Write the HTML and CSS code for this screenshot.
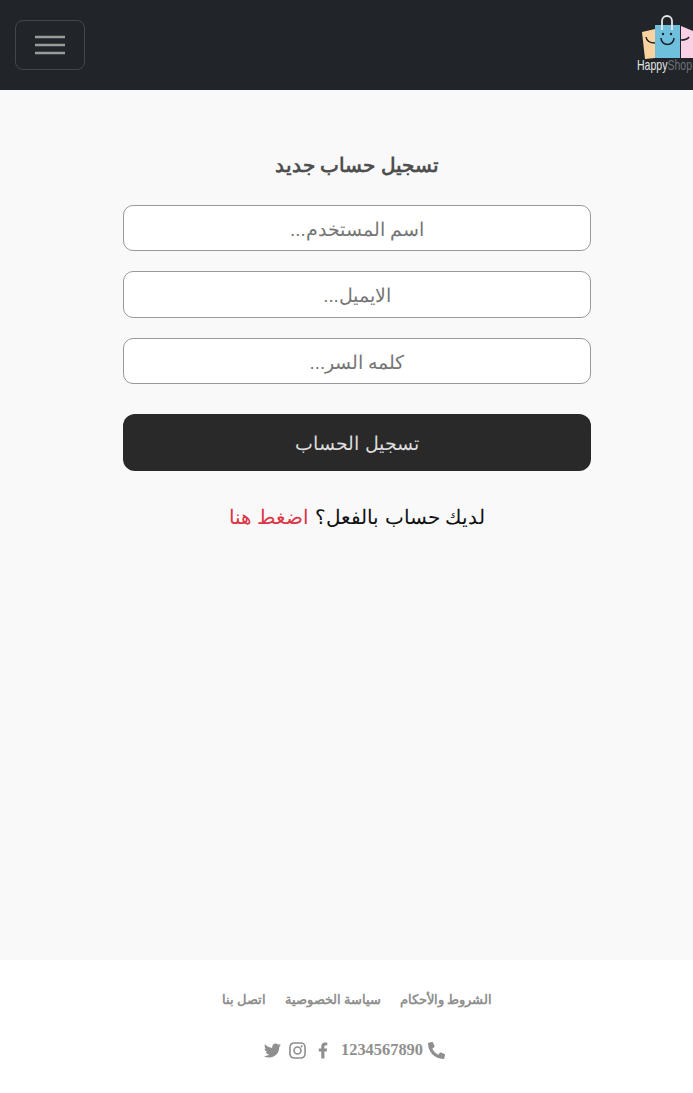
FILE: index.html
```html
<!DOCTYPE html>
<html lang="ar" dir="rtl">
<head>
<meta charset="utf-8">
<title>تسجيل حساب جديد</title>
<link rel="stylesheet" href="styles.css">
</head>
<body>
<header class="topbar" dir="ltr">
  <button class="toggler" type="button" aria-label="menu">
    <svg class="toggler-icon" viewBox="0 0 30 30" width="30" height="30"><path d="M0 7h30M0 15h30M0 23h30" stroke="#9a9a9a" stroke-width="2.6" fill="none"/></svg>
  </button>
  <div class="logo">
    <svg viewBox="0 0 57 62" width="57" height="62">
      <path d="M6 19 L19 16 L19 45 L9 46 Z" fill="#fbd3a0"/>
      <path d="M45 13 L57 18 L57 45 L45 45 Z" fill="#fbcfe4"/>
      <rect x="19" y="12" width="25" height="33" fill="#6fc0dd"/>
      <path d="M26 17 V8 a5 5 0 0 1 10 0 V17" stroke="#e8e8e8" stroke-width="1.800" fill="none"/>
      <path d="M25 25 a6.500 6.500 0 0 0 13 0" stroke="#1d2228" stroke-width="1.500" fill="none"/>
      <path d="M10 24 q1 6 9 6 M45 27 q6 0 8 -3" stroke="#1d2228" stroke-width="1.500" fill="none"/>
      <circle cx="27" cy="21" r="1.200" fill="#1d2228"/><circle cx="35" cy="21" r="1.200" fill="#1d2228"/>
      <text class="logo-text" x="1" y="57" textLength="55" lengthAdjust="spacingAndGlyphs"><tspan class="logo-happy">Happy</tspan><tspan class="logo-shop">Shop</tspan></text>
    </svg>
  </div>
</header>

<main class="page">
  <form class="register">
    <h1 class="title">تسجيل حساب جديد</h1>
    <input class="field" type="text" placeholder="اسم المستخدم...">
    <input class="field field-tall" type="email" placeholder="الايميل...">
    <input class="field" type="password" placeholder="كلمه السر...">
    <button class="submit" type="button">تسجيل الحساب</button>
    <p class="login-note">لديك حساب بالفعل؟ <a class="login-link" href="#">اضغط هنا</a></p>
  </form>
</main>

<footer class="footer">
  <nav class="footer-links">
    <a href="#">الشروط والأحكام</a>
    <a href="#">سياسة الخصوصية</a>
    <a href="#">اتصل بنا</a>
  </nav>
  <div class="footer-contact">
    <svg class="ico" viewBox="0 0 512 512" width="17" height="17"><path fill="#8f8f8f" d="M493 24 389 0c-11-3-23 3-27 14l-48 112c-4 10-1 21 7 28l60 50c-36 77-99 140-177 177l-50-60c-7-8-18-11-28-7L14 362C3 367-3 379 0 390l24 104c2 10 12 18 24 18 256 0 464-207 464-464 0-11-8-21-19-24z" transform="matrix(-1 0 0 1 512 0)"/></svg>
    <span class="phone">1234567890</span>
    <svg class="ico ico-f" viewBox="0 0 320 512" width="10" height="17"><path fill="#8f8f8f" d="M279 288l14-93h-89v-60c0-25 12-50 52-50h41V6s-37-6-72-6C152 0 105 44 105 124v71H24v93h81v224h99V288z"/></svg>
    <svg class="ico" viewBox="0 0 18 18" width="17" height="17"><rect x="1" y="1" width="16" height="16" rx="4.500" fill="none" stroke="#8f8f8f" stroke-width="1.700"/><circle cx="9" cy="9" r="3.700" fill="none" stroke="#8f8f8f" stroke-width="1.700"/><circle cx="13.400" cy="4.600" r="1.100" fill="#8f8f8f"/></svg>
    <svg class="ico" viewBox="0 0 512 512" width="17" height="17"><path fill="#8f8f8f" d="M459 152c0 5 0 9 0 14 0 139-106 299-299 299-59 0-115-17-161-47 8 1 16 1 25 1 49 0 94-17 130-45-46-1-85-31-98-73 7 1 13 2 20 2 9 0 19-1 27-4-48-10-84-52-84-103v-1c14 8 30 13 47 13-28-19-47-51-47-88 0-19 5-37 14-53 52 64 129 105 216 110-2-8-3-16-3-24 0-58 47-105 105-105 30 0 58 13 77 33 24-5 47-14 67-26-8 25-25 46-46 59 21-2 42-8 60-16-14 21-32 39-52 54z"/></svg>
  </div>
</footer>
</body>
</html>
```
FILE: styles.css
```css
* { box-sizing: border-box; }
html, body { margin: 0; padding: 0; }
body {
  width: 693px;
  min-height: 1093px;
  font-family: "Liberation Serif", serif;
  background: #fff;
  display: flex;
  flex-direction: column;
  overflow-x: hidden;
}
.topbar {
  height: 90px;
  background: #212529;
  display: flex;
  align-items: center;
  justify-content: space-between;
  padding-left: 15px;
  overflow: hidden;
}
.toggler {
  width: 70px;
  height: 50px;
  padding: 0;
  background: transparent;
  border: 1px solid #43464b;
  border-radius: 8px;
  display: flex;
  align-items: center;
  justify-content: center;
}
.toggler-icon { display: block; }
.logo { width: 57px; height: 62px; flex: none; margin-top: -2px; }
.logo svg { display: block; }
.logo-text { font-family: "Liberation Sans", sans-serif; font-size: 15px; }
.logo-happy { fill: #e4e4e4; }
.logo-shop { fill: #6f7174; }
.page {
  height: 870px;
  background: #f9f9f9;
  display: flex;
  justify-content: center;
  padding-top: 62px;
  padding-left: 21px;
}
.register {
  width: 468px;
  display: flex;
  flex-direction: column;
  align-items: stretch;
}
.title {
  margin: 0 0 25px;
  height: 28px;
  line-height: 26px;
  font-family: "Liberation Sans", sans-serif;
  font-size: 19.800px;
  font-weight: 700;
  text-align: center;
  color: #4f4f4f;
}
.field {
  height: 46px;
  margin-bottom: 20px;
  padding: 3px 12px 0;
  background: #fff;
  border: 1px solid #999;
  border-radius: 10px;
  font-family: "Liberation Sans", sans-serif;
  font-size: 18.700px;
  text-align: center;
  outline: none;
}
.field-tall { height: 47px; }
.field::placeholder { color: #757575; opacity: 1; }
.submit {
  height: 57px;
  margin-top: 10px;
  padding: 3px 0 0;
  background: #292929;
  border: 0;
  border-radius: 12px;
  color: #ddd;
  font-family: "Liberation Sans", sans-serif;
  font-size: 18.700px;
  text-align: center;
}
.login-note {
  margin: 32px 0 0;
  line-height: 28px;
  font-family: "Liberation Sans", sans-serif;
  font-size: 20px;
  text-align: center;
  color: #111;
}
.login-link { color: #dc3545; text-decoration: none; }
.footer {
  height: 133px;
  background: #fff;
  display: flex;
  flex-direction: column;
  align-items: center;
  padding-top: 30px;
  padding-left: 21px;
}
.footer-links {
  display: flex;
  gap: 19px;
  line-height: 20px;
  font-size: 13px;
  font-weight: 700;
}
.footer-links a { color: #8f8f8f; text-decoration: none; }
.footer-contact {
  display: flex;
  align-items: center;
  gap: 8px;
  margin-top: 29px;
  margin-right: 5px;
  height: 22px;
}
.phone {
  font-size: 16.400px;
  font-weight: 700;
  color: #8f8f8f;
  margin-right: -3px;
  margin-left: 5px;
}
.ico { display: block; flex: none; }
.ico-f { margin-left: 4px; }
```
